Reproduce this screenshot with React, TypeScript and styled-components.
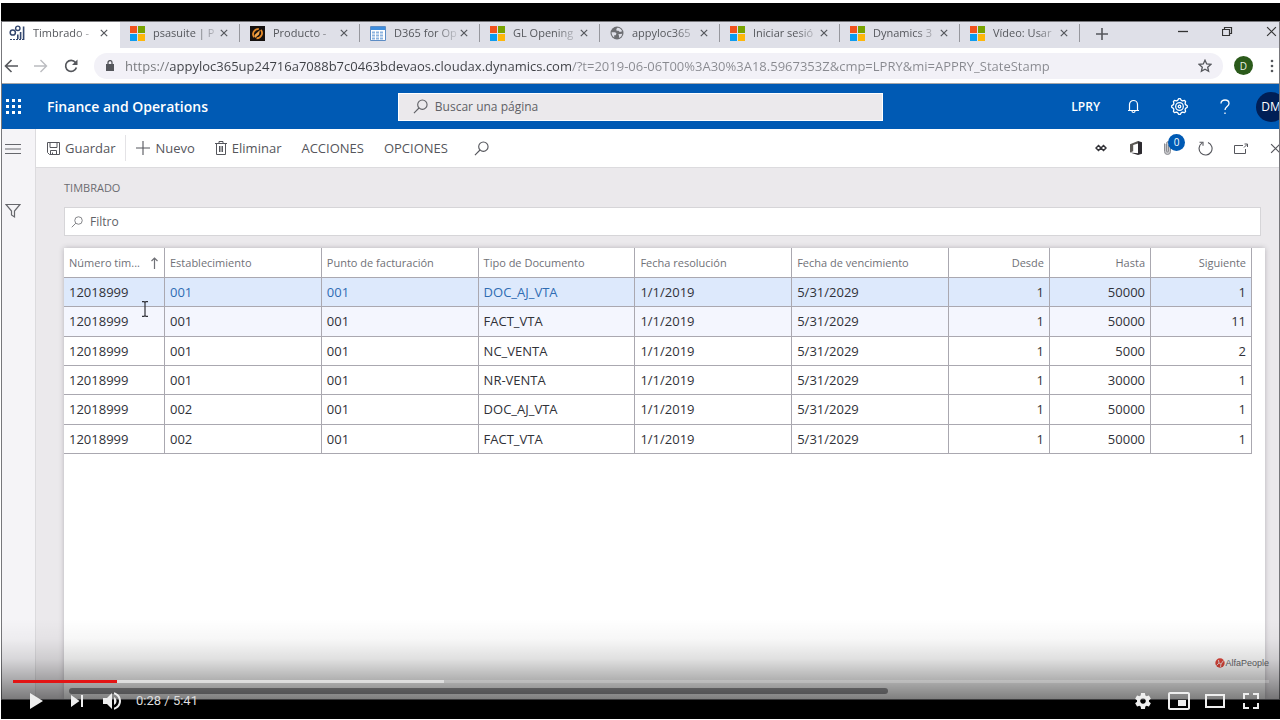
import React from "react";
import styled, { createGlobalStyle, css } from "styled-components";

const GlobalStyle = createGlobalStyle`
  *, *::before, *::after { box-sizing: border-box; }
  body { margin: 0; background: #fff; font-family: "Open Sans", "Noto Sans", sans-serif; }
  button, input { font: inherit; color: inherit; }
  button { background: none; border: 0; padding: 0; cursor: pointer; }
  svg { display: block; flex: none; }
`;

/* ---------- Frame ---------- */

const Page = styled.div`
  display: flex;
  min-height: 100vh;
  padding: 3px 0 1px 1px;
`;

const Player = styled.main`
  position: relative;
  flex: 1;
  min-width: 0;
  display: flex;
  flex-direction: column;
  padding: 18px 0 19px;
  background: #000;
  overflow: hidden;
`;

const Browser = styled.div`
  flex: 1;
  display: flex;
  flex-direction: column;
  min-width: 0;
  border: 1px solid #77777b;
  background: #fff;
  overflow: hidden;
`;

/* ---------- Browser chrome ---------- */

const TabStrip = styled.div`
  display: flex;
  align-items: stretch;
  height: 26px;
  background: #dfe0e8;
  color: #55575c;
`;

const TabItem = styled.div<{ $active?: boolean }>`
  position: relative;
  display: flex;
  align-items: center;
  flex: none;
  width: 120px;
  height: 24px;
  padding: 0 12px 2px 10px;
  font-size: 11px;
  line-height: 16px;
  &::after {
    content: "";
    position: absolute;
    right: 0;
    top: 2px;
    height: 18px;
    border-right: 1px solid #96979d;
  }
  ${(p) =>
    p.$active &&
    css`
      width: 118px;
      height: 26px;
      padding: 0 12px 4px 7px;
      background: #fff;
      &::after { display: none; }
    `}
`;

const TabTitle = styled.span`
  flex: 1;
  min-width: 0;
  margin: 0 2px 0 8px;
  overflow: hidden;
  white-space: nowrap;
  mask-image: linear-gradient(to right, #000 65%, transparent 105%);
`;

const TabClose = styled.button`
  display: flex;
`;

const NewTab = styled.button`
  display: flex;
  align-items: center;
  padding: 0 16px 3px;
`;

const WindowControls = styled.div`
  display: flex;
  align-items: center;
  margin: 0 2px 8px auto;
  color: #333;
`;

const WindowButton = styled.button`
  display: flex;
  justify-content: center;
  width: 44px;
  &:last-child { width: 12px; margin-left: 16px; }
`;

const AddressRow = styled.div`
  display: flex;
  align-items: center;
  height: 36px;
  padding-right: 2px;
  background: #fff;
  color: #55575c;
  border-bottom: 1px solid #a6a6a8;
`;

const NavButton = styled.button`
  display: flex;
  width: 30px;
  padding-left: 2px;
`;

const Omnibox = styled.div`
  flex: 1;
  display: flex;
  align-items: center;
  height: 26px;
  margin-left: 2px;
  padding: 0 11px 0 12px;
  border-radius: 13px;
  background: #f2f1f7;
`;

const UrlInput = styled.input`
  flex: 1;
  min-width: 0;
  height: 20px;
  margin: 0 8px 0 11px;
  padding: 0;
  border: 0;
  outline: 0;
  font-size: 13px;
  color: #55575c;
  background: linear-gradient(to right, #74767a 0 44px, #3d3f44 44px 447px, #88898f 447px);
  background-clip: text;
  -webkit-background-clip: text;
  -webkit-text-fill-color: transparent;
`;

const IconButton = styled.button`
  display: flex;
`;

const ProfileButton = styled.button`
  width: 19px;
  height: 19px;
  margin: 0 16px 0 11px;
  border-radius: 50%;
  background: #2b5a1b;
  color: #e9f0e4;
  font-size: 10px;
  line-height: 18px;
`;

/* ---------- Application header ---------- */

const AppHeader = styled.header`
  display: grid;
  grid-template-columns: 31% 38% 1fr;
  align-items: center;
  height: 45px;
  background: #005ab4;
  color: #fff;
`;

const Brand = styled.div`
  display: flex;
  align-items: center;
  gap: 26px;
  padding-left: 4px;
  font-size: 14px;
  font-weight: 600;
  line-height: 20px;
  white-space: nowrap;
`;

const SearchBox = styled.label`
  display: flex;
  align-items: center;
  gap: 7px;
  height: 28px;
  padding: 0 14px;
  border: 1px solid #fff;
  background: #ebe9ec;
  color: #606166;
`;

const BareInput = styled.input`
  flex: 1;
  min-width: 0;
  padding: 0;
  border: 0;
  outline: 0;
  background: none;
  font-size: 12px;
  &::placeholder { color: #606166; opacity: 1; }
`;

const HeaderActions = styled.div`
  display: flex;
  justify-content: flex-end;
  align-items: center;
  margin-right: -15px;
`;

const Company = styled.button`
  padding: 0 10px;
  font-size: 12px;
  font-weight: 600;
`;

const HeaderSlot = styled.button`
  display: flex;
  align-items: center;
  justify-content: center;
  flex: none;
  width: 46px;
`;

const Avatar = styled.span`
  width: 30px;
  height: 30px;
  border-radius: 50%;
  background: #001f56;
  font-size: 12px;
  line-height: 30px;
  text-align: center;
`;

/* ---------- Workspace ---------- */

const Workspace = styled.div`
  flex: 1;
  display: flex;
`;

const Rail = styled.nav`
  display: flex;
  flex-direction: column;
  gap: 46px;
  flex: none;
  width: 34px;
  padding: 12px 0 0 3px;
  border-right: 1px solid #dcdbde;
  background: #f5f4f7;
  color: #66676c;
`;

const Content = styled.div`
  flex: 1;
  display: flex;
  flex-direction: column;
  min-width: 0;
  background: #ebe9ec;
`;

const CommandBar = styled.div`
  display: flex;
  align-items: center;
  height: 39px;
  padding-left: 11px;
  border-bottom: 1px solid #dcdbde;
  background: #fff;
  color: #55565c;
`;

const Command = styled.button<{ $divided?: boolean }>`
  display: flex;
  align-items: center;
  gap: 5px;
  height: 26px;
  padding-right: 10px;
  margin-right: 10px;
  font-size: 13px;
  line-height: 20px;
  ${(p) => p.$divided && css`border-right: 1px solid #e4e3e6;`}
`;

const SearchCommand = styled(Command)`
  padding-left: 6px;
`;

const CommandActions = styled.div`
  display: flex;
  margin: 0 -14px 0 auto;
`;

const CommandSlot = styled.button`
  position: relative;
  display: flex;
  align-items: center;
  justify-content: center;
  width: 35px;
  height: 26px;
`;

const Badge = styled.span`
  position: absolute;
  left: 15px;
  top: -1px;
  width: 17px;
  height: 17px;
  border-radius: 50%;
  background: #005ab4;
  color: #fff;
  font-size: 10px;
  line-height: 17px;
  text-align: center;
`;

const FormBody = styled.section`
  flex: 1;
  display: flex;
  flex-direction: column;
  padding: 12px 14px 0 28px;
`;

const FormTitle = styled.h1`
  margin: 0;
  color: #6b6c71;
  font-size: 11px;
  font-weight: 400;
  line-height: 16px;
`;

const FilterBox = styled.label`
  display: flex;
  align-items: center;
  gap: 7px;
  height: 29px;
  margin: 11px 4px 12px 0;
  padding: 0 6px;
  border: 1px solid #d6d5d8;
  background: #fff;
  color: #77787d;
`;

const GridPanel = styled.div`
  flex: 1;
  display: flex;
  flex-direction: column;
  justify-content: space-between;
  min-height: 450px;
  background: #fff;
  box-shadow: 0 0 5px rgba(60, 55, 65, 0.3);
`;

const GridArea = styled.div`
  padding-right: 13px;
`;

const Grid = styled.table`
  width: 100%;
  height: 206px;
  table-layout: fixed;
  border-collapse: separate;
  border-spacing: 0;
  color: #303138;
  font-size: 13px;
  line-height: 18px;
`;

const NarrowCol = styled.col`
  width: 101px;
`;

const Cell = styled.td<{ $numeric?: boolean; $link?: boolean }>`
  padding: 0 5px;
  border-right: 1px solid #aaa8b0;
  border-bottom: 1px solid #aaa8b0;
  text-align: ${(p) => (p.$numeric ? "right" : "left")};
  white-space: nowrap;
  ${(p) => p.$link && css`color: #2f6cb3;`}
`;

const HeadCell = styled(Cell).attrs({ as: "th", scope: "col" })`
  height: 30px;
  color: #707177;
  font-size: 11px;
  font-weight: 400;
`;

const SortHead = styled.span`
  display: flex;
  justify-content: space-between;
  align-items: center;
`;

const Row = styled.tr<{ $tone?: "selected" | "hover" }>`
  background: ${(p) =>
    p.$tone === "selected" ? "#dde9fc" : p.$tone === "hover" ? "#f4f6fe" : "#fff"};
`;

const ScrollTrack = styled.div`
  padding: 0 0 5px 5px;
`;

const ScrollThumb = styled.div`
  width: 68.5%;
  height: 6px;
  border-radius: 3px;
  background: #98989b;
`;

/* ---------- Video overlay ---------- */

const Pointer = styled.span`
  position: absolute;
  left: 140px;
  top: 298px;
`;

const Watermark = styled.span`
  position: absolute;
  right: 11px;
  bottom: 50px;
  display: flex;
  align-items: center;
  color: #66666a;
  font-family: "Liberation Sans", sans-serif;
  font-size: 9px;
  line-height: 12px;
`;

const Controls = styled.div`
  position: absolute;
  left: 0;
  right: 0;
  bottom: 0;
  display: flex;
  flex-direction: column;
  justify-content: flex-end;
  height: 100px;
  padding: 0 11px 0 12px;
  background: linear-gradient(
    to bottom,
    rgba(0, 0, 0, 0) 0,
    rgba(0, 0, 0, 0.03) 20px,
    rgba(0, 0, 0, 0.12) 40px,
    rgba(0, 0, 0, 0.3) 60px,
    rgba(0, 0, 0, 0.5) 80px,
    rgba(0, 0, 0, 0.7) 100px
  );
`;

const Progress = styled.div`
  display: flex;
  height: 3px;
  background: rgba(255, 255, 255, 0.2);
`;

const ProgressPart = styled.div<{ $played?: boolean }>`
  background: ${(p) => (p.$played ? "#e31414" : "rgba(255, 255, 255, 0.5)")};
`;

const ControlRow = styled.div`
  display: flex;
  align-items: center;
  height: 36px;
  padding-left: 5px;
  color: #eee;
`;

const ControlButton = styled.button`
  display: flex;
  justify-content: center;
  width: 36px;
  height: 36px;
  &:first-child { margin-right: 5px; }
`;

const Time = styled.span`
  flex: 1;
  padding-left: 5px;
  color: #ddd;
  font-family: Roboto, sans-serif;
  font-size: 13px;
  line-height: 36px;
`;

/* ---------- Icons ---------- */

type StrokeProps = {
  w: number;
  h?: number;
  d: string;
  sw?: number;
  vb?: string;
  color?: string;
};

const Stroke = ({ w, h = w, d, sw = 1, vb, color = "currentColor" }: StrokeProps) => (
  <svg width={w} height={h} viewBox={vb ?? `0 0 ${w} ${h}`} fill="none" stroke={color} strokeWidth={sw} aria-hidden>
    <path d={d} />
  </svg>
);

const Magnifier = ({ size }: { size: number }) => (
  <Stroke w={size} vb="0 0 16 16" sw={1.2} d="M15 6a5 5 0 1 1-10 0 5 5 0 0 1 10 0zM6.4 9.6 1 15" />
);

const WindowsIcon = () => (
  <svg width="15" height="15" viewBox="0 0 15 15" aria-hidden>
    <path fill="#f0521d" d="M0 0h7v7H0z" />
    <path fill="#78a300" d="M8 0h7v7H8z" />
    <path fill="#0c9bf0" d="M0 8h7v7H0z" />
    <path fill="#fdb60a" d="M8 8h7v7H8z" />
  </svg>
);

const OperationsIcon = () => (
  <svg width="16" height="16" viewBox="0 0 16 16" fill="none" stroke="#33476f" aria-hidden>
    <circle cx="3.8" cy="7.5" r="2.6" strokeWidth="1.5" />
    <circle cx="8.8" cy="3.3" r="2.2" strokeWidth="1.4" />
    <path strokeWidth="1.6" d="M8.8 14V9.5M11.6 14V7M14.6 15V1.5" />
    <path strokeDasharray="2 1" d="M1 14.5h13" />
  </svg>
);

const ProductIcon = () => (
  <svg width="15" height="15" viewBox="0 0 15 15" aria-hidden>
    <path fill="#15110f" d="M0 0h15v15H0z" />
    <path fill="none" stroke="#e58b2b" strokeWidth="1.8" d="M4.200 11.200C1.600 8 3.800 2.800 8.800 2.800M10.800 3.800c2.800 3.200.6 8.400-4.300 8.600" />
    <path fill="#f2a64b" d="m4.500 9 5.500-5-1 4.500L5 12z" />
  </svg>
);

const SheetIcon = () => (
  <svg width="16" height="15" viewBox="0 0 16 15" aria-hidden>
    <path fill="#fff" stroke="#5d8cc4" d="M.5.5h15v14H.5z" />
    <path fill="#3e8ddd" d="M1 1h14v3H1z" />
    <path stroke="#8db4df" strokeDasharray="3 1" strokeWidth="2" d="M2 6.500h12M2 9.500h12M2 12.500h12" />
  </svg>
);

const GlobeIcon = () => (
  <svg width="14" height="14" viewBox="0 0 14 14" aria-hidden>
    <circle cx="7" cy="7" r="6.500" fill="#6d6e72" />
    <path fill="#dfe0e8" d="M1.600 6.200h3.600l1.300 1.400-.8 1.600H4.200v2.200C2.500 10.300 1.500 8.400 1.600 6.200zM7.500 1.700c2.200.2 4 1.500 4.700 3.600L9.800 6 8.500 4.700H6.600L6.300 3zM8.300 8.300l3.900-.6c-.3 2-1.500 3.600-3.300 4.300l.2-2z" />
  </svg>
);

const CloseX = ({ size = 8, sw = 1.5 }: { size?: number; sw?: number }) => (
  <Stroke w={size} vb="0 0 10 10" sw={sw} d="M1 1l8 8M9 1 1 9" />
);

const Waffle = () => (
  <svg width="15" height="15" viewBox="0 0 15 15" fill="currentColor" aria-hidden>
    {[0, 6, 12].map((y) =>
      [0, 6, 12].map((x) => <rect key={`${x}-${y}`} x={x} y={y} width="3" height="3" />)
    )}
  </svg>
);

const cogPoints = Array.from({ length: 32 }, (_, i) => {
  const angle = ((i - 0.5) * Math.PI) / 16;
  const r = i % 4 < 2 ? 7.4 : 6;
  return `${(8 + r * Math.sin(angle)).toFixed(2)},${(8 - r * Math.cos(angle)).toFixed(2)}`;
}).join(" ");

const Cog = () => (
  <svg width="17" height="17" viewBox="0 0 16 16" fill="none" stroke="currentColor" strokeWidth="1.200" strokeLinejoin="round" aria-hidden>
    <polygon points={cogPoints} />
    <circle cx="8" cy="8" r="3.600" />
    <circle cx="8" cy="8" r="1.200" />
  </svg>
);

const PlayerIcon = ({ d }: { d: string }) => (
  <svg width="36" height="36" viewBox="0 0 36 36" fill="currentColor" fillRule="evenodd" aria-hidden>
    <path d={d} />
  </svg>
);

const playerPaths = {
  play: "M12 10 25 18 12 26z",
  next: "M12 24 20.500 18 12 12zM22 12v12h2V12z",
  volume:
    "M8 21h4l5 5V10l-5 5H8zM19 14v8c1.480-.680 2.500-2.230 2.500-4s-1.020-3.260-2.500-4zM19 11.290c2.890.860 5 3.540 5 6.710s-2.110 5.850-5 6.710v2.060c4.010-.910 7-4.490 7-8.770s-2.990-7.860-7-8.770z",
  settings:
    "m23.94 18.78c.03-.25.05-.51.05-.78 0-.27-.02-.52-.05-.78l1.68-1.32c.15-.12.19-.33.09-.51l-1.6-2.76c-.09-.17-.31-.24-.48-.17l-1.99.8c-.41-.32-.86-.58-1.35-.78l-.3-2.12c-.02-.19-.19-.33-.39-.33h-3.200c-.2 0-.36.14-.39.33l-.3 2.12c-.48.2-.93.47-1.35.78l-1.99-.8c-.18-.07-.39 0-.48.17l-1.600 2.760c-.1.17-.05.39.09.51l1.680 1.320c-.03.25-.05.52-.05.78 0 .26.02.52.05.78l-1.680 1.320c-.15.12-.19.33-.09.51l1.600 2.760c.09.17.31.24.48.17l1.990-.8c.41.32.86.58 1.350.78l.3 2.120c.02.19.19.33.39.33h3.200c.2 0 .36-.14.39-.33l.3-2.120c.48-.2.93-.47 1.350-.78l1.990.8c.18.07.39 0 .48-.17l1.600-2.760c.09-.17.05-.39-.09-.51zm-5.940 2.010c-1.540 0-2.800-1.250-2.800-2.800 0-1.540 1.250-2.800 2.800-2.800 1.540 0 2.800 1.250 2.800 2.800 0 1.540-1.250 2.800-2.800 2.800z",
  mini: "M25 17h-8v6h8zM29 25V11c0-1.100-.9-2-2-2H9c-1.100 0-2 .9-2 2v14c0 1.100.9 2 2 2h18c1.100 0 2-.9 2-2zM27 25H9V11h18z",
  theater: "M28 11v14H8V11zM10 13h16v10H10z",
  full: "M10 16h2v-4h4v-2h-6zM20 10v2h4v4h2v-6zM24 24h-4v2h6v-6h-2zM12 20h-2v6h6v-2h-4z",
};

/* ---------- Data ---------- */

const tabs = [
  { title: "Timbrado -", icon: <OperationsIcon /> },
  { title: "psasuite | P", icon: <WindowsIcon /> },
  { title: "Producto -", icon: <ProductIcon /> },
  { title: "D365 for Op", icon: <SheetIcon /> },
  { title: "GL Opening", icon: <WindowsIcon /> },
  { title: "appyloc365", icon: <GlobeIcon /> },
  { title: "Iniciar sesió", icon: <WindowsIcon /> },
  { title: "Dynamics 3", icon: <WindowsIcon /> },
  { title: "Vídeo: Usar", icon: <WindowsIcon /> },
];

const textColumns = [
  "Establecimiento",
  "Punto de facturación",
  "Tipo de Documento",
  "Fecha resolución",
  "Fecha de vencimiento",
];
const numberColumns = ["Desde", "Hasta", "Siguiente"];

const rows = [
  ["001", "DOC_AJ_VTA", "50000", "1"],
  ["001", "FACT_VTA", "50000", "11"],
  ["001", "NC_VENTA", "5000", "2"],
  ["001", "NR-VENTA", "30000", "1"],
  ["002", "DOC_AJ_VTA", "50000", "1"],
  ["002", "FACT_VTA", "50000", "1"],
];

const URL_TEXT =
  "https://appyloc365up24716a7088b7c0463bdevaos.cloudax.dynamics.com/?t=2019-06-06T00%3A30%3A18.5967353Z&cmp=LPRY&mi=APPRY_StateStamp";

/* ---------- View ---------- */

const Chrome = () => (
  <>
    <TabStrip>
      {tabs.map((tab, i) => (
        <TabItem key={i} $active={i === 0}>
          {tab.icon}
          <TabTitle>{tab.title}</TabTitle>
          <TabClose aria-label="Cerrar pestaña"><CloseX /></TabClose>
        </TabItem>
      ))}
      <NewTab aria-label="Nueva pestaña"><Stroke w={12} sw={1.6} d="M6 0v12M0 6h12" /></NewTab>
      <WindowControls>
        <WindowButton aria-label="Minimizar"><Stroke w={10} d="M0 5.500h10" sw={1.3} /></WindowButton>
        <WindowButton aria-label="Restaurar"><Stroke w={11} d="M.5 3.500h7v6h-7zM2.500 3.500v-2h7v6h-2" sw={1.2} /></WindowButton>
        <WindowButton aria-label="Cerrar"><CloseX size={11} sw={1.1} /></WindowButton>
      </WindowControls>
    </TabStrip>
    <AddressRow>
      <NavButton aria-label="Atrás"><Stroke w={14} sw={1.6} d="M14 7H2M7.500 1 1.500 7l6 6" /></NavButton>
      <NavButton aria-label="Adelante"><Stroke w={14} sw={1.4} color="#bbbcc0" d="M0 7h12M6.500 1l6 6-6 6" /></NavButton>
      <NavButton aria-label="Recargar">
        <svg width="14" height="14" viewBox="0 0 14 14" aria-hidden>
          <path fill="none" stroke="currentColor" strokeWidth="1.700" d="M11.500 3.500A5.500 5.500 0 1 0 12.400 8.500" />
          <path fill="currentColor" d="M13.500.5V6H8z" />
        </svg>
      </NavButton>
      <Omnibox>
        <svg width="8" height="12" viewBox="0 0 8 12" aria-hidden>
          <path fill="#55575c" d="M0 4h8v7H0z" />
          <path fill="none" stroke="#55575c" strokeWidth="1.300" d="M2 4V2.600a2 2 0 0 1 4 0V4" />
        </svg>
        <UrlInput aria-label="Dirección" defaultValue={URL_TEXT} />
        <IconButton aria-label="Marcador">
          <Stroke w={14} sw={1.3} d="M7 1.200 8.700 5l4.100.4-3.100 2.800.9 4.100L7 10.200l-3.600 2.100.9-4.100L1.200 5.400 5.300 5z" />
        </IconButton>
      </Omnibox>
      <ProfileButton>D</ProfileButton>
      <IconButton aria-label="Menú">
        <svg width="8" height="14" viewBox="0 0 8 14" fill="#55575c" aria-hidden>
          <circle cx="3" cy="2" r="1.300" /><circle cx="3" cy="7" r="1.300" /><circle cx="3" cy="12" r="1.300" />
        </svg>
      </IconButton>
    </AddressRow>
  </>
);

const Header = () => (
  <AppHeader>
    <Brand>
      <IconButton aria-label="Aplicaciones"><Waffle /></IconButton>
      Finance and Operations
    </Brand>
    <SearchBox>
      <Magnifier size={15} />
      <BareInput aria-label="Buscar una página" placeholder="Buscar una página" />
    </SearchBox>
    <HeaderActions>
      <Company>LPRY</Company>
      <HeaderSlot aria-label="Notificaciones">
        <Stroke w={13} h={15} sw={1.2} d="M1 11.500h11M2.500 11.500V5.500a4 4 0 0 1 8 0v6M5 12a1.500 1.500 0 0 0 3 0" />
      </HeaderSlot>
      <HeaderSlot aria-label="Configuración"><Cog /></HeaderSlot>
      <HeaderSlot aria-label="Ayuda">
        <Stroke w={10} h={16} sw={1.3} d="M1 4.500C1 2 2.800 1 5 1s4 1.200 4 3.500C9 7.500 5 7.500 5 11M5 13.500V15" />
      </HeaderSlot>
      <HeaderSlot aria-label="Cuenta"><Avatar>DM</Avatar></HeaderSlot>
    </HeaderActions>
  </AppHeader>
);

const Commands = () => (
  <CommandBar>
    <Command $divided>
      <Stroke w={13} d="M.5.5h12v12H2.500l-2-2zM3 .5v5h7v-5M3.500 12.500v-4h6v4M5.500 12.500v-2" />
      Guardar
    </Command>
    <Command>
      <Stroke w={14} sw={1.1} d="M7 0v14M0 7h14" />
      Nuevo
    </Command>
    <Command>
      <Stroke w={12} h={14} d="M0 2.500h12M4 2.500v-2h4v2M1.500 2.500v11h9v-11M4.500 5v6M6 5v6M7.500 5v6" />
      Eliminar
    </Command>
    <Command>ACCIONES</Command>
    <Command>OPCIONES</Command>
    <SearchCommand aria-label="Buscar"><Magnifier size={15} /></SearchCommand>
    <CommandActions>
      <CommandSlot aria-label="Conectores">
        <Stroke w={12} h={8} sw={1.5} color="#333338" d="M3.500 1.500 6 4 3.500 6.500 1 4zM8.500 1.500 11 4 8.500 6.500 6 4z" />
      </CommandSlot>
      <CommandSlot aria-label="Abrir en Office">
        <svg width="12" height="14" viewBox="0 0 12 14" aria-hidden>
          <path fill="#5b5854" d="M0 3.200 8 0v2.600L3.200 3.900v6.300L0 11.400z" />
          <path fill="#2d2b30" d="M8 0l4 1.300v11.400L8 14 0 11.400l8 .9z" />
        </svg>
      </CommandSlot>
      <CommandSlot aria-label="Adjuntos">
        <svg width="16" height="14" viewBox="0 0 16 14" fill="none" stroke="#8c8d92" aria-hidden>
          <path fill="#c9c9cc" d="M1.500 2.500v8a3 3 0 0 0 6 0v-8a2 2 0 0 0-4 0v7.500a1 1 0 0 0 2 0V4" />
        </svg>
        <Badge>0</Badge>
      </CommandSlot>
      <CommandSlot aria-label="Actualizar">
        <Stroke w={15} sw={1.1} d="M10 1.500A6.500 6.500 0 1 1 4 2.100M1.500 1.200H5v3.500" />
      </CommandSlot>
      <CommandSlot aria-label="Abrir en ventana nueva">
        <Stroke w={14} h={11} d="M9 2.500H.5v8h11V6M10 4.500l3-3M10.500 1h3v3" />
      </CommandSlot>
      <CommandSlot aria-label="Cerrar"><CloseX size={11} sw={1.1} /></CommandSlot>
    </CommandActions>
  </CommandBar>
);

const StampGrid = () => (
  <Grid>
    <colgroup>
      <NarrowCol />
      {textColumns.map((c) => <col key={c} />)}
      {numberColumns.map((c) => <NarrowCol key={c} />)}
    </colgroup>
    <thead>
      <tr>
        <HeadCell>
          <SortHead>
            Número tim...
            <Stroke w={9} h={12} d="M4.500 12V1M1.500 4l3-3 3 3" sw={1.2} />
          </SortHead>
        </HeadCell>
        {textColumns.map((c) => <HeadCell key={c}>{c}</HeadCell>)}
        {numberColumns.map((c) => <HeadCell key={c} $numeric>{c}</HeadCell>)}
      </tr>
    </thead>
    <tbody>
      {rows.map(([branch, type, to, next], i) => (
        <Row key={i} $tone={i === 0 ? "selected" : i === 1 ? "hover" : undefined}>
          <Cell>12018999</Cell>
          <Cell $link={i === 0}>{branch}</Cell>
          <Cell $link={i === 0}>001</Cell>
          <Cell $link={i === 0}>{type}</Cell>
          <Cell>1/1/2019</Cell>
          <Cell>5/31/2029</Cell>
          <Cell $numeric>1</Cell>
          <Cell $numeric>{to}</Cell>
          <Cell $numeric>{next}</Cell>
        </Row>
      ))}
    </tbody>
  </Grid>
);

export default function App() {
  return (
    <Page>
      <GlobalStyle />
      <Player>
        <Browser>
          <Chrome />
          <Header />
          <Workspace>
            <Rail>
              <IconButton aria-label="Navegación"><Stroke w={16} d="M0 3.500h16M0 8h16M0 12.500h16" sw={1.2} /></IconButton>
              <IconButton aria-label="Filtros"><Stroke w={16} d="M1 1.500h14L9.500 8v6l-3-2V8z" sw={1.2} /></IconButton>
            </Rail>
            <Content>
              <Commands />
              <FormBody>
                <FormTitle>TIMBRADO</FormTitle>
                <FilterBox>
                  <Magnifier size={12} />
                  <BareInput aria-label="Filtro" placeholder="Filtro" />
                </FilterBox>
                <GridPanel>
                  <GridArea><StampGrid /></GridArea>
                  <ScrollTrack><ScrollThumb /></ScrollTrack>
                </GridPanel>
              </FormBody>
            </Content>
          </Workspace>
        </Browser>
        <Pointer>
          <Stroke w={8} h={16} color="#303138" sw={1.2} d="M1 .6h2L4 1.500 5 .6h2M4 1.500v13M1 15.400h2l1-.9 1 .9h2" />
        </Pointer>
        <Watermark>
          <svg width="10" height="10" viewBox="0 0 10 10" aria-hidden>
            <circle cx="5" cy="5" r="4.700" fill="#e2473c" />
            <path fill="none" stroke="#f3d9d6" d="M1.500 7.500 4 5l-.5-3M4 5l2 1 2.500-3.500M6 6l-.5 3" />
          </svg>
          AlfaPeople
        </Watermark>
        <Controls>
          <Progress>
            <ProgressPart $played style={{ width: "8.28%" }} />
            <ProgressPart style={{ width: "26.05%" }} />
          </Progress>
          <ControlRow>
            <ControlButton aria-label="Reproducir"><PlayerIcon d={playerPaths.play} /></ControlButton>
            <ControlButton aria-label="Siguiente"><PlayerIcon d={playerPaths.next} /></ControlButton>
            <ControlButton aria-label="Silenciar"><PlayerIcon d={playerPaths.volume} /></ControlButton>
            <Time>0:28 / 5:41</Time>
            <ControlButton aria-label="Configuración"><PlayerIcon d={playerPaths.settings} /></ControlButton>
            <ControlButton aria-label="Minirreproductor"><PlayerIcon d={playerPaths.mini} /></ControlButton>
            <ControlButton aria-label="Modo cine"><PlayerIcon d={playerPaths.theater} /></ControlButton>
            <ControlButton aria-label="Pantalla completa"><PlayerIcon d={playerPaths.full} /></ControlButton>
          </ControlRow>
        </Controls>
      </Player>
    </Page>
  );
}
